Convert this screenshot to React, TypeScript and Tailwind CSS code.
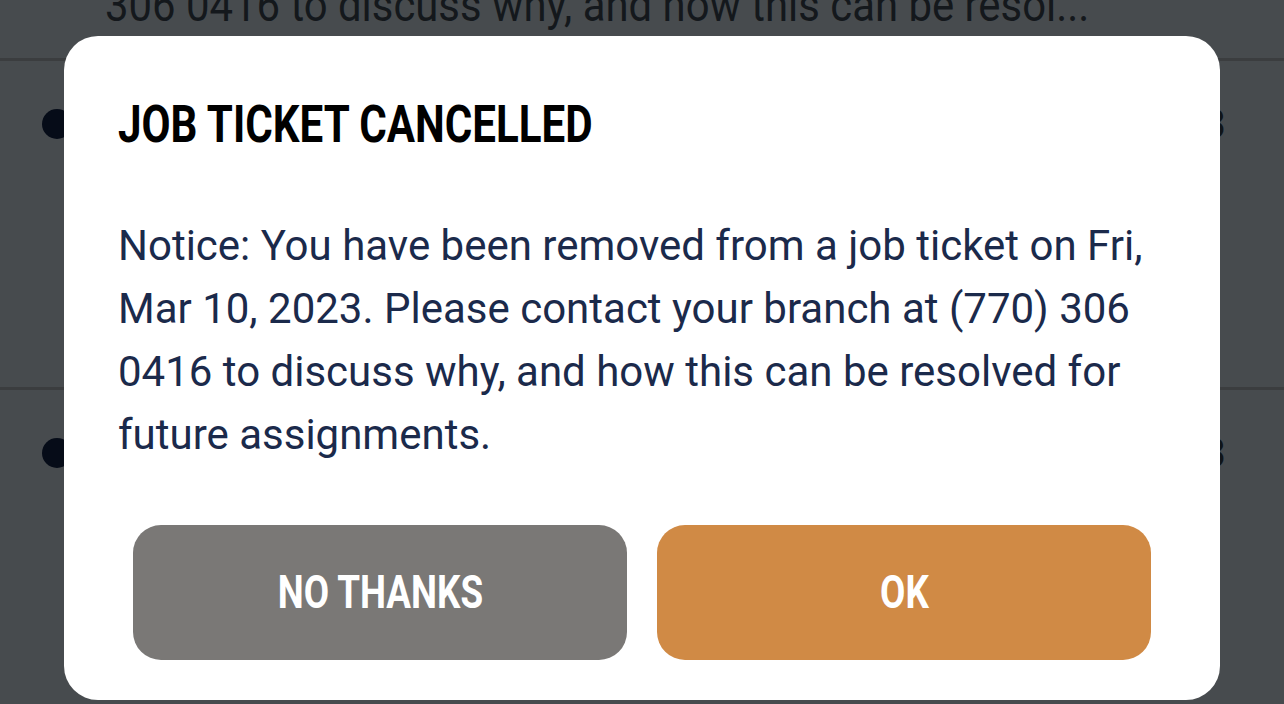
import React from "react";

const condensed = "inline-block origin-center scale-x-[0.8] font-bold";

function BackgroundRow({ date }: { date: string }) {
  return (
    <div className="h-[329px] border-b-[3px] border-[#3b3d3f] flex items-start px-[42px] pt-[46px]">
      <div className="w-[30px] h-[30px] rounded-full bg-[#060c18] shrink-0 mt-[2px]" />
      <div className="flex-1" />
      <div className="text-[40px] leading-none text-[#101418] mr-[16px] mt-[-2px]">{date}</div>
    </div>
  );
}

export default function App() {
  return (
    <div
      className="relative w-[1284px] h-[704px] overflow-hidden bg-[#474b4e]"
      style={{ fontFamily: "Roboto, 'Noto Sans', sans-serif" }}
    >
      {/* dimmed page underneath */}
      <div className="h-[61px] border-b-[3px] border-[#3b3d3f] pl-[105px] overflow-hidden">
        <div className="-mt-[20px] text-[46px] leading-[50px] text-[#14181c]">
          <span className="inline-block origin-left scale-x-[0.91] whitespace-nowrap">
            306 0416 to discuss why, and how this can be resol...
          </span>
        </div>
      </div>
      <BackgroundRow date="2023" />
      <BackgroundRow date="2023" />

      {/* dialog */}
      <div className="absolute left-[64px] top-[36px] w-[1156px] h-[664px] bg-white rounded-[34px] flex flex-col">
        <div className="pl-[54px] pr-[54px] pt-[59px]">
          <h2 className="text-[52px] leading-[60px] text-black">
            <span className="inline-block origin-left scale-x-[0.81] font-bold whitespace-nowrap">
              JOB TICKET CANCELLED
            </span>
          </h2>
          <p className="mt-[59px] text-[42px] leading-[63px] text-[#1b2a4b]">
            Notice: You have been removed from a job ticket on Fri, Mar 10, 2023. Please contact your branch at (770) 306 0416 to discuss why, and how this can be resolved for future assignments.
          </p>
        </div>
        <div className="flex-1" />
        <div className="flex gap-[30px] px-[69px] pb-[40px]">
          <button className="flex-1 h-[135px] rounded-[28px] bg-[#7a7876] text-white text-[46px] flex items-center justify-center">
            <span className={condensed}>NO THANKS</span>
          </button>
          <button className="flex-1 h-[135px] rounded-[28px] bg-[#d08a45] text-white text-[46px] flex items-center justify-center">
            <span className={condensed}>OK</span>
          </button>
        </div>
      </div>
    </div>
  );
}
